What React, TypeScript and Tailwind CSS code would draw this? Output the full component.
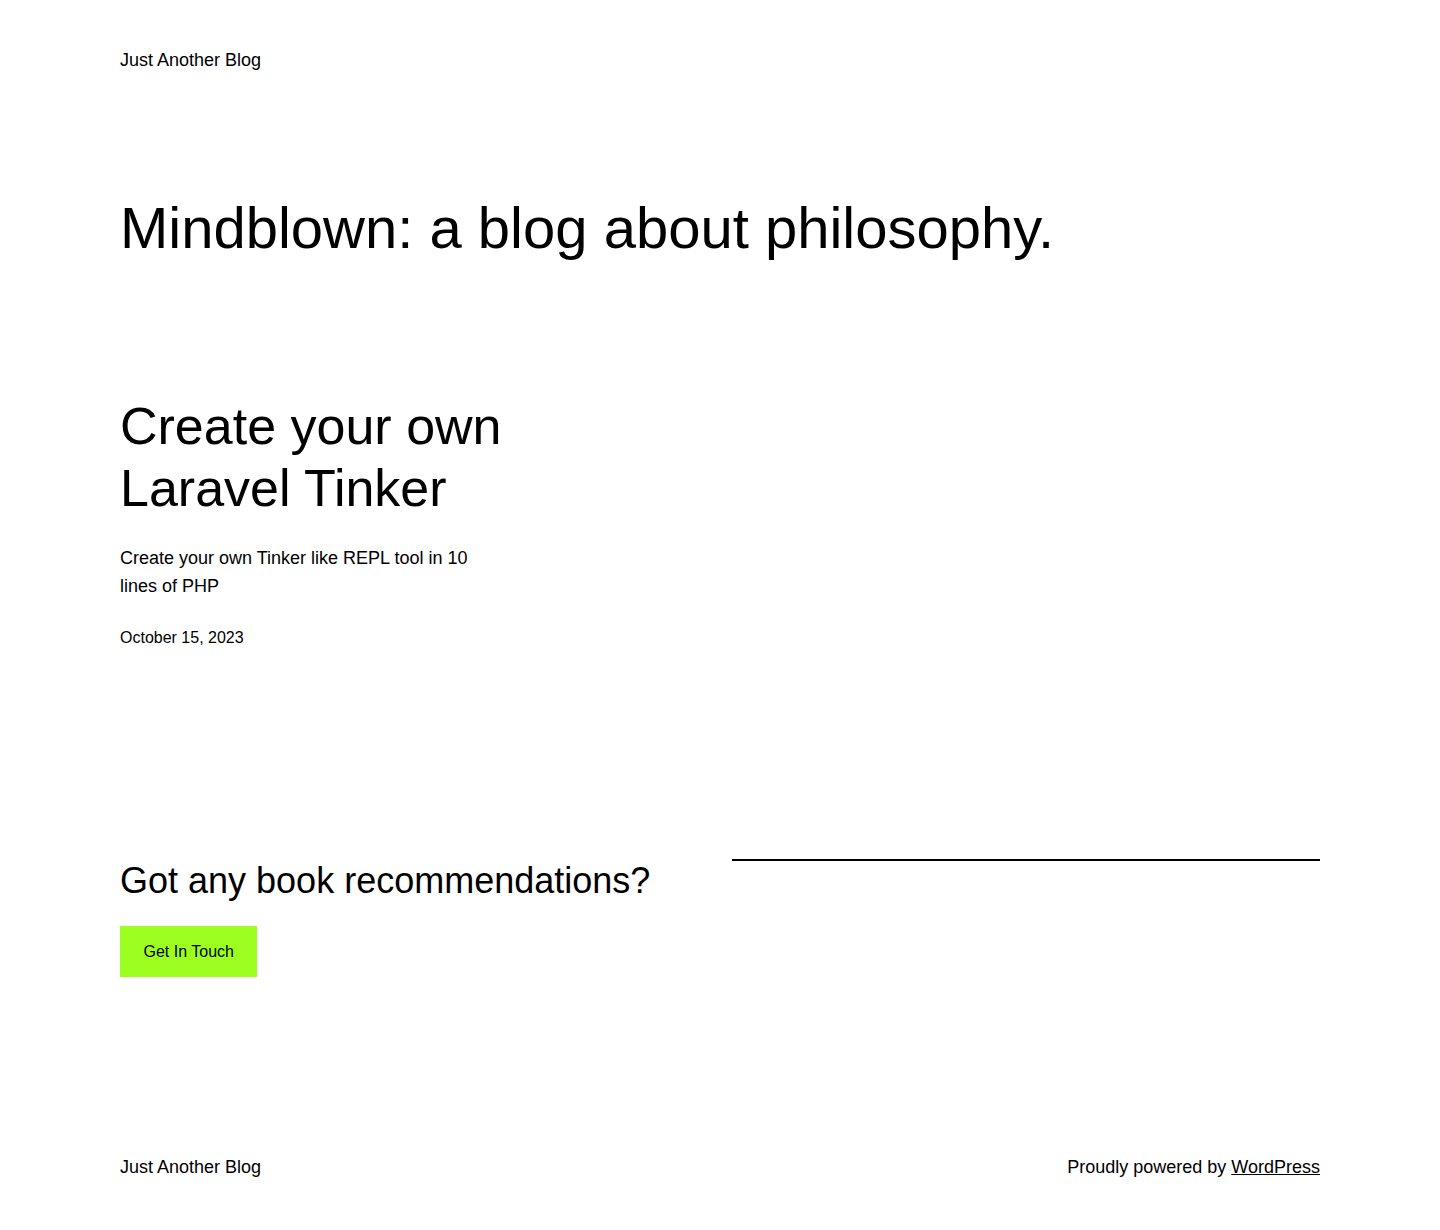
export default function App() {
  return (
    <div className="min-h-[1230px] bg-white px-[120px] text-black [font-family:'Liberation_Sans',Arial,sans-serif]">
      <header className="pt-[46px]">
        <p className="text-[18px] leading-[28px]">Just Another Blog</p>
      </header>

      <main>
        <h1 className="mt-[119px] text-[58px] leading-[70px]">Mindblown: a blog about philosophy.</h1>

        <section className="mt-[132px] grid grid-cols-3 gap-6">
          <article>
            <h2 className="text-[52px] leading-[62px]">Create your own Laravel Tinker</h2>
            <p className="mt-[25px] text-[18px] leading-[28px]">Create your own Tinker like REPL tool in 10 lines of PHP</p>
            <p className="mt-[27px] text-[16px] leading-[22px]">October 15, 2023</p>
          </article>
        </section>

        <section className="mt-[210px] grid grid-cols-2 gap-6">
          <div className="flex flex-col items-start">
            <h2 className="text-[36px] leading-[43px]">Got any book recommendations?</h2>
            <a href="#" className="mt-[24px] block bg-[#9dff20] px-[23.5px] py-[13px] text-[16px] leading-[25px]">
              Get In Touch
            </a>
          </div>
          <div>
            <hr className="border-t-2 border-black" />
          </div>
        </section>
      </main>

      <footer className="mt-[176px] flex items-center justify-between pb-[39px] text-[18px] leading-[28px]">
        <p>Just Another Blog</p>
        <p>
          Proudly powered by{" "}
          <a href="#" className="underline">
            WordPress
          </a>
        </p>
      </footer>
    </div>
  );
}
